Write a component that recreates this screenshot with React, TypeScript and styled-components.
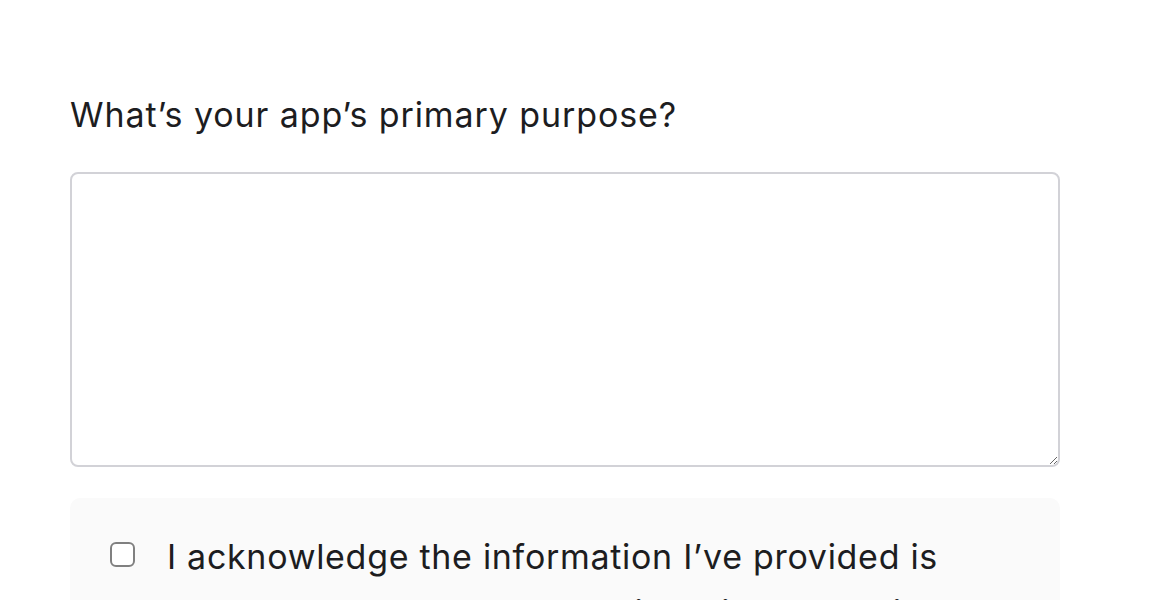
import styled, { createGlobalStyle } from "styled-components";

const Global = createGlobalStyle`
  html, body {
    margin: 0;
    padding: 0;
    background: #fff;
  }
  body {
    font-family: Inter, "Noto Sans", sans-serif;
    color: #1d1d1f;
  }
`;

const Page = styled.main`
  width: 990px;
  padding: 83px 0 0 70px;
`;

const Question = styled.label`
  display: block;
  font-size: 34px;
  line-height: 64px;
  letter-spacing: 0.9px;
  margin-bottom: 25px;
`;

const Answer = styled.textarea`
  display: block;
  box-sizing: border-box;
  width: 990px;
  height: 295px;
  border: 2px solid #d2d2d7;
  border-radius: 8px;
  padding: 16px 20px;
  font: inherit;
  font-size: 34px;
  outline: none;
  resize: vertical;
`;

const Acknowledge = styled.div`
  display: flex;
  align-items: flex-start;
  gap: 32px;
  margin-top: 31px;
  padding: 31px 40px;
  background: #fafafa;
  border-radius: 10px;
`;

const Box = styled.input`
  appearance: none;
  flex: none;
  width: 25px;
  height: 25px;
  margin: 13px 0 0;
  border: 2px solid #808080;
  border-radius: 6px;
  background: #fff;
`;

const AckText = styled.label`
  font-size: 34px;
  line-height: 56px;
  letter-spacing: 0.7px;
`;

export default function App() {
  return (
    <>
      <Global />
      <Page>
        <Question htmlFor="purpose">What’s your app’s primary purpose?</Question>
        <Answer id="purpose" />
        <Acknowledge>
          <Box type="checkbox" id="ack" />
          <AckText htmlFor="ack">
            I acknowledge the information I’ve provided is accurate and the app complies with all applicable policies.
          </AckText>
        </Acknowledge>
      </Page>
    </>
  );
}
